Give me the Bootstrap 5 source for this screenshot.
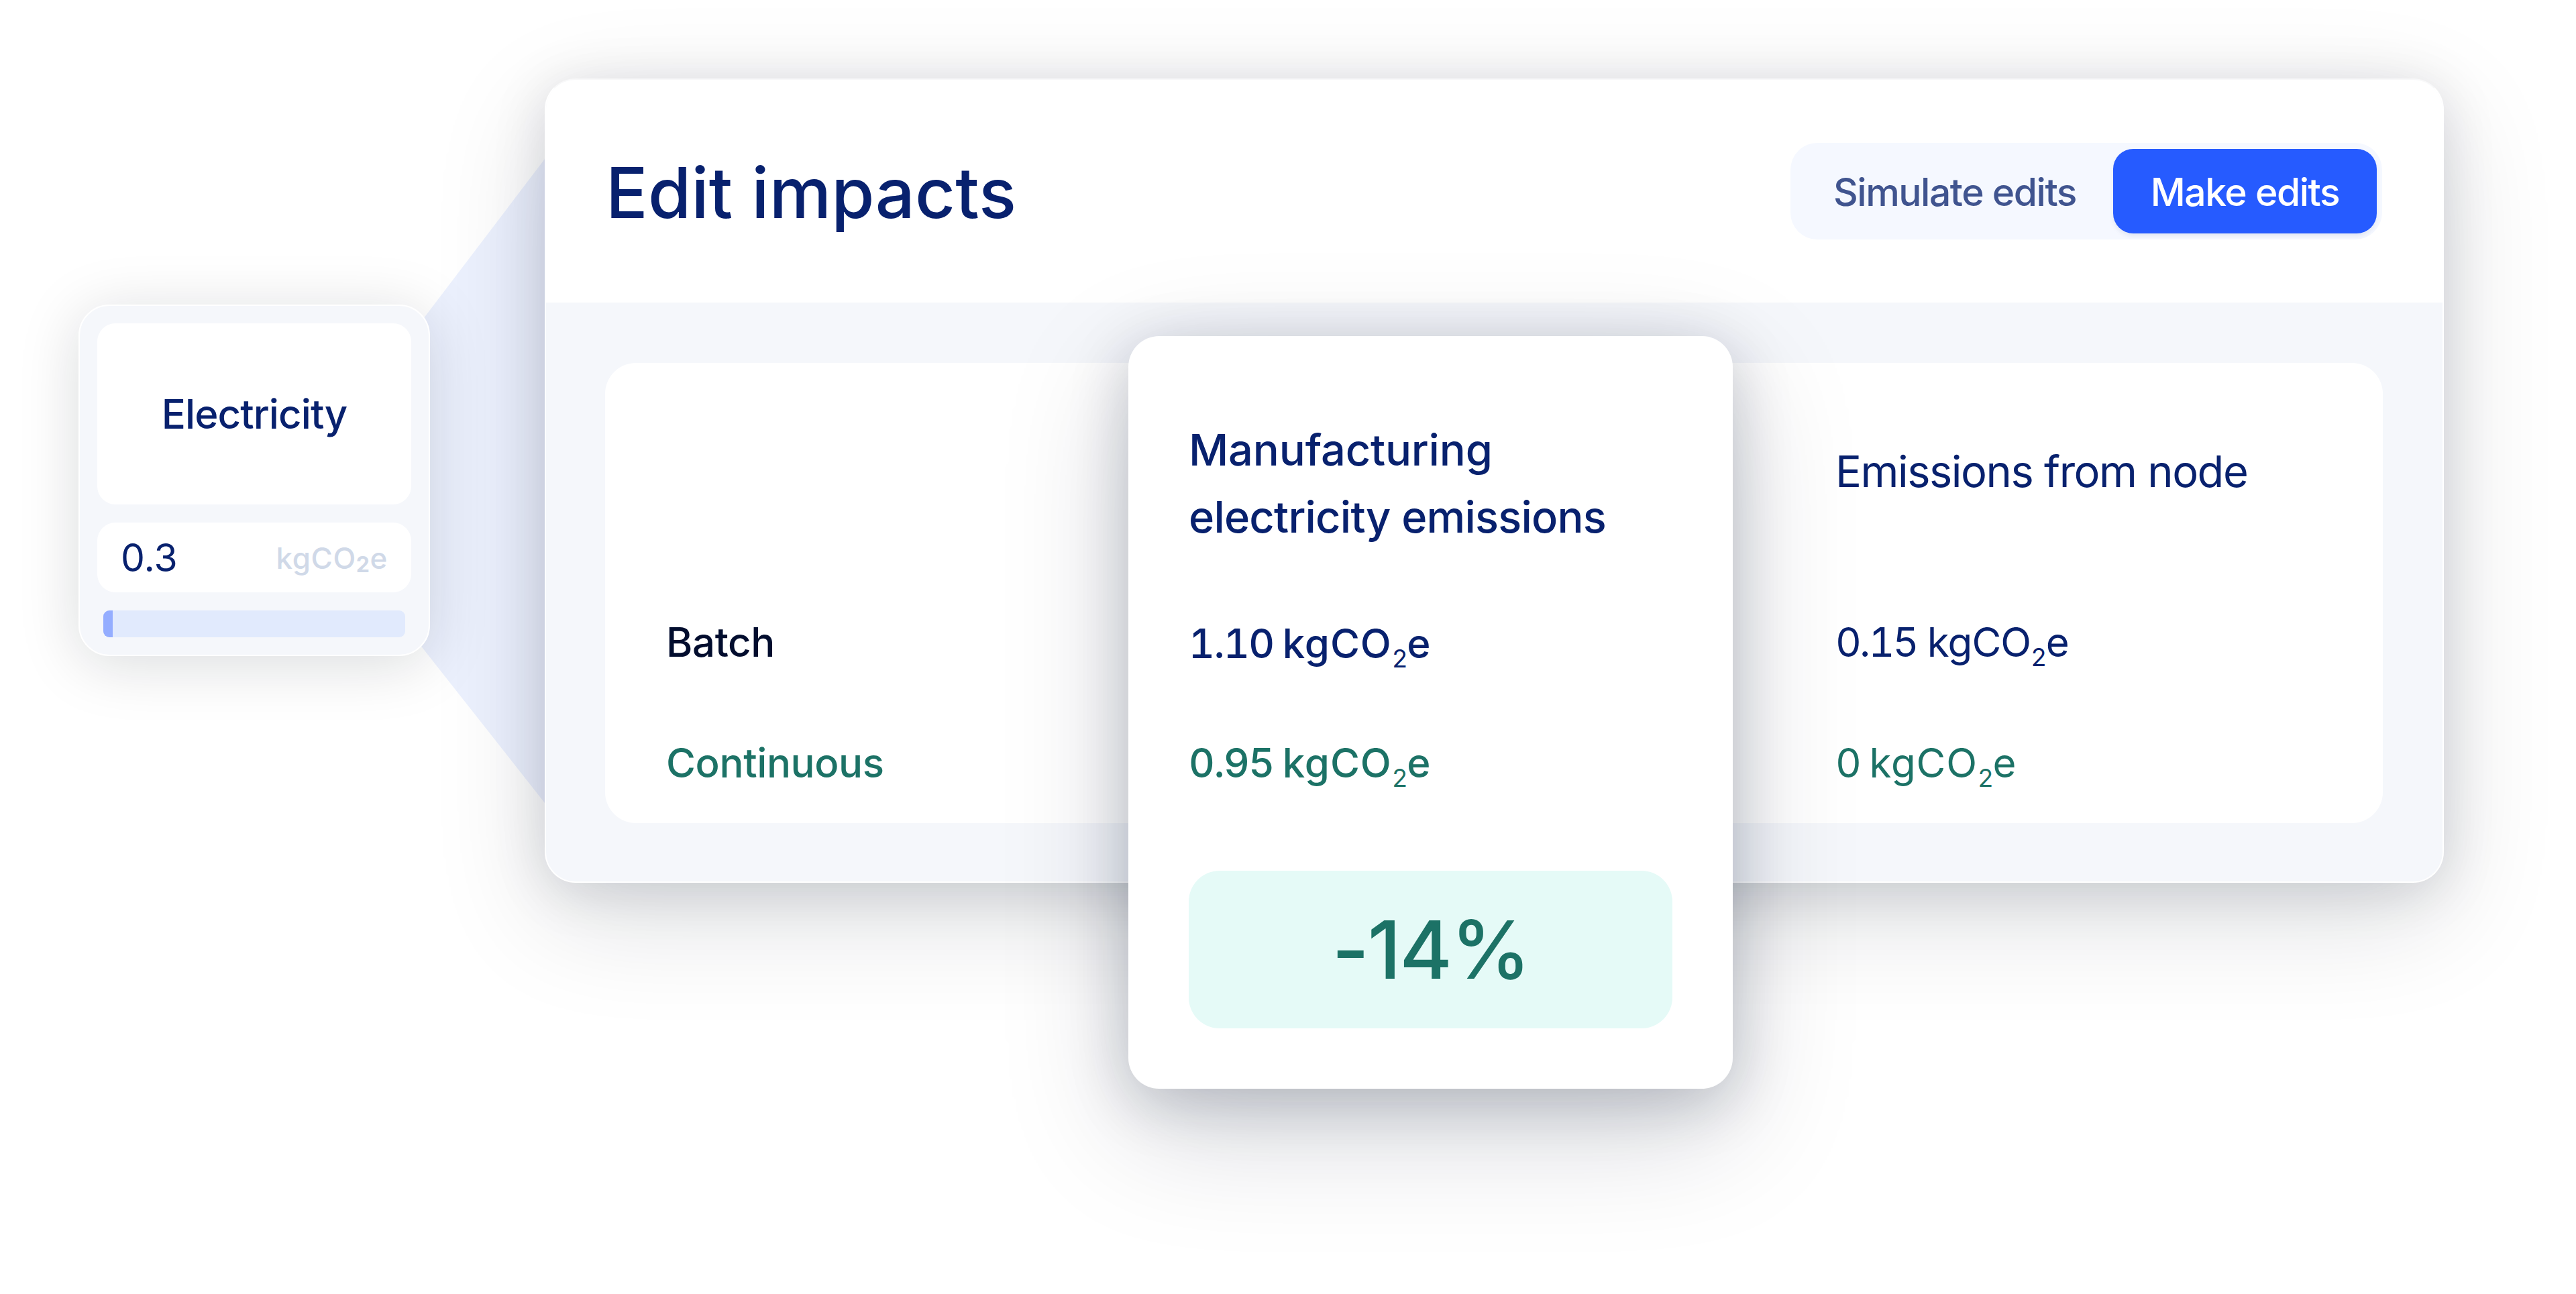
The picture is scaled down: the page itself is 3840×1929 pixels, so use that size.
<!DOCTYPE html>
<html lang="en">
<head>
    <meta charset="UTF-8">
    <meta name="viewport" content="width=device-width, initial-scale=1.0">
    <title>Edit impacts</title>
    <link href="https://cdn.jsdelivr.net/npm/bootstrap@5.3.0/dist/css/bootstrap.min.css" rel="stylesheet">
    <style>
        body {
            font-family: Inter, "Liberation Sans", sans-serif;
            color: #08216e;
            background-color: #fff;
            font-size: 60px;
            line-height: 1.2;
        }
        .stage {
            width: 3840px;
            height: 1929px;
            padding: 117px 0 0 117px;
        }
        .text-green { color: #1c7266; }
        .text-ink { color: #020d2e; }
        .medium { font-weight: 500; }

        /* Node on the left */
        .node {
            width: 524px;
            height: 524px;
            margin-top: 337px;
            padding: 26px;
            gap: 27px;
            border: 2px solid #fff;
            border-radius: 46px;
            background-color: #f5f7fb;
            box-shadow: 0 12px 90px rgba(8, 18, 30, .15);
            z-index: 1;
        }
        .node-title {
            height: 271px;
            border-radius: 27px;
            letter-spacing: -.9px;
        }
        .node-value {
            height: 104px;
            padding: 2px 35px 0;
            border-radius: 27px;
            font-size: 57px;
        }
        .node-unit {
            font-size: 44px;
            letter-spacing: .6px;
            color: #d0d9e8;
        }
        .node-unit sub { font-size: 32px; font-weight: 700; vertical-align: -5px; }
        .node-bar {
            --bs-progress-height: 40px;
            --bs-progress-bg: #e1eafd;
            --bs-progress-bar-bg: #94adff;
            --bs-progress-border-radius: 9px;
            margin: 0 9px;
        }

        /* Funnel between the node and the panel */
        .funnel {
            width: 212px;
            height: 960px;
            margin: 120px 0 0 -41px;
            background-color: #ecf1fe;
            clip-path: polygon(0 279px, 100% 0, 100% 100%, 0 691px);
        }

        .panel {
            width: 2831px;
            height: 1199px;
            border-radius: 46px;
            border: 2px solid #fff;
            border-top-color: #f8f8f9;
            background-color: #f5f7fb;
            box-shadow: 0 12px 80px rgba(8, 18, 36, .13), 0 50px 170px rgba(8, 18, 36, .14);
            z-index: 1;
        }
        .panel-head {
            height: 332px;
            padding: 0 90px 0 89px;
            border-radius: 44px 44px 0 0;
        }
        .panel-title {
            font-size: 104px;
            letter-spacing: .2px;
            padding-top: 5px;
        }
        .switch {
            width: 882px;
            height: 144px;
            padding: 9px 8px 9px 9px;
            border-radius: 40px;
            background-color: #f5f8ff;
        }
        .switch .btn {
            --bs-btn-font-size: 57px;
            --bs-btn-font-weight: 500;
            --bs-btn-border-width: 0;
            --bs-btn-border-radius: 30px;
            --bs-btn-color: #40548f;
            --bs-btn-line-height: 1.2;
            --bs-btn-padding-x: 0;
            padding-top: 5px;
            padding-bottom: 0;
            letter-spacing: -1.5px;
        }
        .switch .btn-primary {
            --bs-btn-color: #fff;
            --bs-btn-bg: #265bff;
            width: 393px;
            box-shadow: 0 4px 6px rgba(8, 33, 110, .08);
        }

        .sheet {
            width: 2650px;
            margin: 90px 0 0 88px;
            padding-left: 91px;
            border-radius: 46px;
        }
        .sheet-head { height: 326px; font-size: 65px; letter-spacing: -1.5px; padding-bottom: 3px; }
        .sheet-row { height: 180px; }
        .sheet-label { width: 1743px; letter-spacing: -.4px; }
        .amount {
            font-variant-numeric: tabular-nums;
            letter-spacing: .9px;
            word-spacing: -4px;
        }
        .amount span { letter-spacing: -1.5px; }
        .amount-tight { letter-spacing: -.9px; word-spacing: 0; }
        .amount-tight span { letter-spacing: -2.8px; }
        sub { position: static; }
        .amount sub {
            font-size: 37px;
            font-weight: 400;
            vertical-align: -14px;
            letter-spacing: -1.5px;
        }

        /* Highlighted column floats over the sheet and sticks out below */
        .highlight {
            left: 868px;
            top: 382px;
            width: 901px;
            height: 1122px;
            padding: 120px 90px 90px;
            border-radius: 46px;
            box-shadow: 0 20px 90px rgba(8, 18, 46, .2), 0 60px 190px rgba(8, 18, 46, .18);
        }
        .highlight-title {
            font-size: 65px;
            line-height: 99.5px;
            margin-bottom: 50px;
            letter-spacing: -.2px;
        }
        .highlight-title span { letter-spacing: -.8px; }
        .highlight-row { height: 178px; }
        .delta {
            height: 235px;
            margin-top: 72px;
            border-radius: 46px;
            background-color: #e5faf7;
            font-size: 120px;
            letter-spacing: -2.3px;
        }
    </style>
</head>
<body>

    <main class="stage d-flex align-items-start overflow-hidden">

        <!-- Node -->
        <section class="node d-flex flex-column position-relative flex-shrink-0">
            <div class="node-title bg-white d-flex align-items-center justify-content-center medium">Electricity</div>
            <div class="node-value bg-white d-flex align-items-center justify-content-between">
                <span>0.3</span>
                <span class="node-unit medium">kgCO<sub>2</sub>e</span>
            </div>
            <div class="progress node-bar">
                <div class="progress-bar" style="width: 3%"></div>
            </div>
        </section>

        <div class="funnel flex-shrink-0"></div>

        <!-- Edit impacts panel -->
        <section class="panel position-relative flex-shrink-0">
            <header class="panel-head bg-white d-flex align-items-center justify-content-between">
                <h1 class="panel-title m-0">Edit impacts</h1>
                <div class="switch d-flex">
                    <button type="button" class="btn flex-grow-1">Simulate edits</button>
                    <button type="button" class="btn btn-primary">Make edits</button>
                </div>
            </header>

            <div class="sheet bg-white">
                <div class="sheet-head d-flex align-items-center">
                    <div class="sheet-label"></div>
                    <div>Emissions from node</div>
                </div>
                <div class="sheet-row d-flex align-items-center">
                    <div class="sheet-label text-ink medium">Batch</div>
                    <div class="amount amount-tight"><span>0.15</span> kgCO<sub>2</sub>e</div>
                </div>
                <div class="sheet-row d-flex align-items-center text-green">
                    <div class="sheet-label medium">Continuous</div>
                    <div class="amount"><span>0</span> kgCO<sub>2</sub>e</div>
                </div>
            </div>

            <div class="highlight bg-white position-absolute medium">
                <div class="highlight-title">Manufacturing<br><span>electricity emissions</span></div>
                <div class="highlight-row d-flex align-items-center">
                    <div class="amount"><span>1.10</span> kgCO<sub>2</sub>e</div>
                </div>
                <div class="highlight-row d-flex align-items-center text-green">
                    <div class="amount"><span>0.95</span> kgCO<sub>2</sub>e</div>
                </div>
                <div class="delta d-flex align-items-center justify-content-center text-green">-14%</div>
            </div>
        </section>

    </main>

    <script src="https://cdn.jsdelivr.net/npm/bootstrap@5.3.0/dist/js/bootstrap.bundle.min.js"></script>
</body>
</html>
